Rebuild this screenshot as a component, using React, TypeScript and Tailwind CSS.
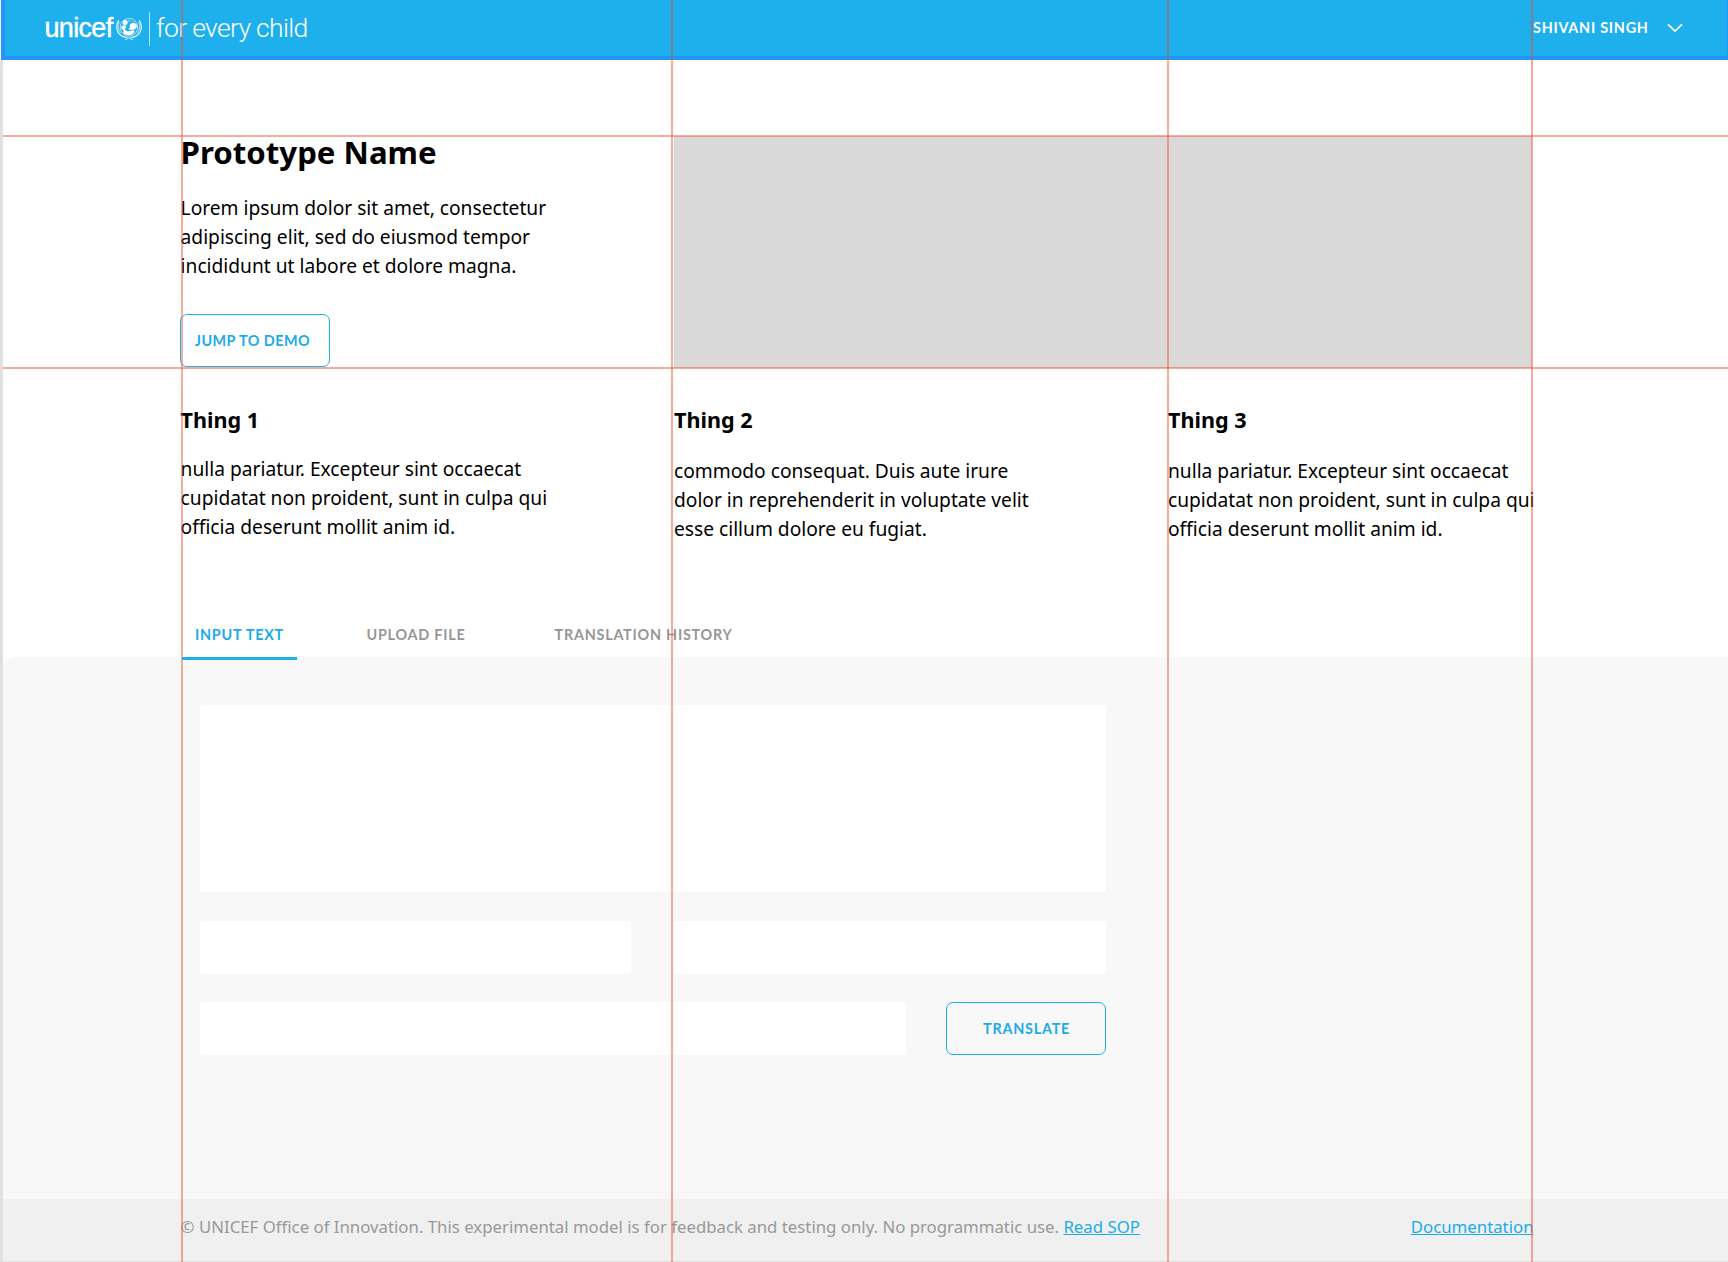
import React from "react";

const labelFont = "block font-['Lato','Open_Sans',sans-serif] font-bold text-[14.400px] leading-[20px] whitespace-nowrap";

function Emblem() {
  return (
    <svg className="block h-[24px] w-[28px]" viewBox="0 0 28 24" fill="none" stroke="#fff">
      <circle cx="14" cy="10.200" r="8.800" strokeWidth=".7" opacity=".85" />
      <circle cx="14" cy="10.200" r="6.400" strokeWidth=".4" opacity=".6" />
      <path d="M14 1.400v4M5.200 10.200h2M21.500 10.200h1.500M8 4l1 1M20.400 4l-2.200 2.200M7.600 16.800l1.500-1.500M20.400 16.800l-1.500-1.500" strokeWidth=".5" opacity=".7" />
      <g fill="#fff" stroke="none">
        <circle cx="10.200" cy="5.600" r="2.500" />
        <path d="M6.200 11.200c-.2-1.700 1.200-3.100 3-3 1.300.1 2.100.7 2 1.500l-1.400 2.700c1.200 1.500 2.900 2.200 5.100 1.700l3.500-.9 1.200 1c-1 2.700-3.100 4.100-6 4.100-2.800 0-4.700-1.100-5.500-3l.8-1.400-2.700-2.700Z" />
        <ellipse cx="18.300" cy="9" rx="3.600" ry="3" />
        <path d="M15 10.200l-1.600 1.700 1.700 1.200 4.400-.5 1.200-2.400Z" />
      </g>
      <g strokeWidth="1.200" strokeLinecap="round">
        <path d="M3.600 3.700C1 7.800.9 13.600 4.800 17.300c1.900 1.900 4.400 3 7.200 3.200" strokeDasharray="1.700 1" />
        <path d="M24.400 3.700c2.600 4.100 2.700 9.900-1.200 13.600-1.900 1.900-4.400 3-7.200 3.200" strokeDasharray="1.700 1" />
        <path d="M4.200 5.500C2.800 9 3.100 13 6 15.900M23.800 5.500c1.400 3.500 1.100 7.500-1.800 10.400" strokeWidth=".7" strokeDasharray="1.400 1" />
        <path d="M10.500 22.800c1.200-.3 2.600-1.300 3.500-2.300.9 1 2.300 2 3.500 2.300" strokeWidth=".8" />
      </g>
    </svg>
  );
}

function Header() {
  return (
    <header className="ml-px flex h-[60px] border-r border-b-4 border-l-4 border-r-[#2196ff] border-b-[#2196ff] border-l-[#2196ff] bg-[#1eafed] text-white">
      <div className="flex flex-1 items-start pl-[39.500px]">
        <span className="mt-[12px] w-[70.500px] whitespace-nowrap font-['Liberation_Sans',sans-serif] text-[27px] leading-[32px] tracking-[-0.68px] [-webkit-text-stroke:0.4px_#fff]">
          unicef
        </span>
        <div className="mt-[17px]">
          <Emblem />
        </div>
        <div className="mt-[12px] ml-[6px] h-[34px] w-px bg-white/70" />
        <span className="mt-[12px] ml-[6px] whitespace-nowrap font-['Roboto',sans-serif] text-[26.500px] leading-[32px] font-light tracking-[-0.7px]">
          for every child
        </span>
      </div>
      <div className="flex w-[194px] items-start">
        <span className={labelFont + " mt-[18px] w-[134px] tracking-[0.74px]"}>SHIVANI SINGH</span>
        <svg className="mt-[23px] h-[10px] w-[16px]" viewBox="0 0 16 10" fill="none" stroke="#fff" strokeWidth="1.700">
          <path d="M1 1.300 8 8l7-6.700" />
        </svg>
      </div>
    </header>
  );
}

function Thing({ title, lines, width, offset }: { title: string; lines: string[]; width: string; offset: string }) {
  return (
    <section className={width}>
      <h2 className="text-[21.600px] leading-[30px] font-bold">{title}</h2>
      <p className={"text-[19.200px] leading-[28.800px] whitespace-nowrap " + offset}>
        {lines.map((line) => (
          <span className="block" key={line}>
            {line}
          </span>
        ))}
      </p>
    </section>
  );
}

function Guides() {
  return (
    <div className="pointer-events-none absolute inset-0">
      <div className="absolute inset-y-0 left-[181px] w-[2px] bg-[#f24822]/45" />
      <div className="absolute inset-y-0 left-[671px] w-[2px] bg-[#f24822]/45" />
      <div className="absolute inset-y-0 left-[1167px] w-[2px] bg-[#f24822]/45" />
      <div className="absolute inset-y-0 left-[1531px] w-[2px] bg-[#f24822]/45" />
      <div className="absolute top-[135px] right-0 left-[3px] h-[2px] bg-[#f24822]/45" />
      <div className="absolute top-[367px] right-0 left-[3px] h-[2px] bg-[#f24822]/45" />
    </div>
  );
}

export default function App() {
  return (
    <div className="relative flex h-[1262px] w-[1728px] flex-col overflow-hidden bg-white font-['Noto_Sans',sans-serif] text-black">
      <Header />
      <div className="flex h-[1202px] flex-col border-b border-l-[3px] border-b-[#e0e0e0] border-l-[#e0e0e0]">
        <main className="flex h-[597px] flex-col pl-[177.600px]">
          <div className="flex h-[345px] pt-[71px]">
            <div className="flex w-[493.400px] flex-col items-start">
              <h1 className="text-[31.200px] leading-[42px] font-bold">Prototype Name</h1>
              <p className="mt-[21px] text-[19.200px] leading-[28.800px] whitespace-nowrap">
                Lorem ipsum dolor sit amet, consectetur
                <br />
                adipiscing elit, sed do eiusmod tempor
                <br />
                incididunt ut labore et dolore magna.
              </p>
              <button className="mt-[34px] -ml-[0.600px] flex h-[53px] w-[150px] shrink-0 items-center rounded-[7px] border border-[#1eafed] pl-[13.800px] text-[#1cabe9]">
                <span className={labelFont + " tracking-[0.45px]"}>JUMP TO DEMO</span>
              </button>
            </div>
            <div className="mt-[5px] h-[232px] w-[858px] bg-[#d9d9d9]" />
          </div>
          <div className="flex h-[200px]">
            <Thing
              title="Thing 1"
              width="w-[493.400px]"
              offset="mt-[20px]"
              lines={["nulla pariatur. Excepteur sint occaecat", "cupidatat non proident, sunt in culpa qui", "officia deserunt mollit anim id."]}
            />
            <Thing
              title="Thing 2"
              width="w-[494px]"
              offset="mt-[22.400px]"
              lines={["commodo consequat. Duis aute irure", "dolor in reprehenderit in voluptate velit", "esse cillum dolore eu fugiat."]}
            />
            <Thing
              title="Thing 3"
              width="w-[494px]"
              offset="mt-[22.400px]"
              lines={["nulla pariatur. Excepteur sint occaecat", "cupidatat non proident, sunt in culpa qui", "officia deserunt mollit anim id."]}
            />
          </div>
          <nav className="ml-[1.400px] flex h-[52px] items-start pt-[20px] text-[#969696]">
            <div className="z-10 h-[35px] w-[115px] border-b-[3px] border-[#1eafed] pl-[13px] text-[#1cabe9]">
              <span className={labelFont + " tracking-[0.76px]"}>INPUT TEXT</span>
            </div>
            <span className={labelFont + " ml-[69.500px] w-[188px] tracking-[0.76px]"}>UPLOAD FILE</span>
            <span className={labelFont + " tracking-[0.76px]"}>TRANSLATION HISTORY</span>
          </nav>
        </main>
        <section className="h-[542px] rounded-tl-[12px] bg-[#f8f8f8] pt-[48px] pl-[197px]">
          <div className="flex w-[906px] flex-col">
            <div className="h-[187px] rounded-[3px] bg-white" />
            <div className="mt-[28.600px] flex h-[53px] justify-between">
              <div className="w-[431px] rounded-[3px] bg-white" />
              <div className="w-[432px] rounded-[3px] bg-white" />
            </div>
            <div className="mt-[28.600px] flex h-[52.600px] justify-between">
              <div className="w-[706px] rounded-[3px] bg-white" />
              <button className="flex w-[160px] items-center rounded-[7px] border border-[#1eafed] pt-[1px] pl-[36px] text-[#1cabe9]">
                <span className={labelFont + " tracking-[0.76px]"}>TRANSLATE</span>
              </button>
            </div>
          </div>
        </section>
        <footer className="flex h-[62px] items-start bg-[#f0f0f0] pt-[16px] pl-[177.600px] text-[16.800px] leading-[24px] text-[#999]">
          <p className="w-[1230.200px] whitespace-nowrap">
            © UNICEF Office of Innovation. This experimental model is for feedback and testing only. No programmatic use.{" "}
            <a className="text-[#1cabe9] underline">Read SOP</a>
          </p>
          <a className="text-[#1cabe9] underline">Documentation</a>
        </footer>
      </div>
      <Guides />
    </div>
  );
}
